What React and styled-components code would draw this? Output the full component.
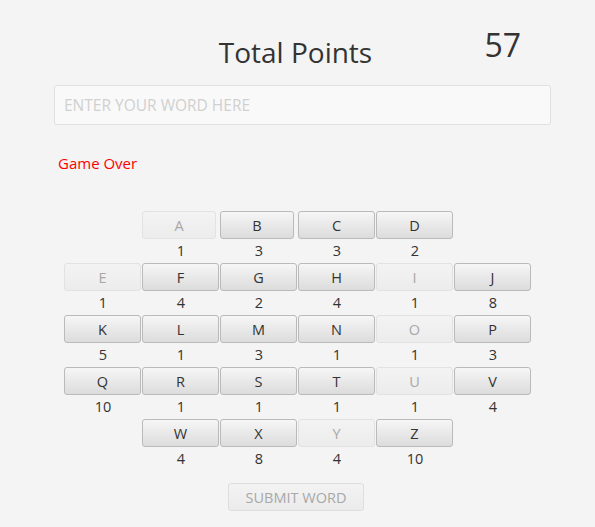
import React from "react";
import styled, { createGlobalStyle } from "styled-components";

const GlobalStyle = createGlobalStyle`
  body {
    margin: 0;
    background: #f4f4f4;
    font-family: "Open Sans", "DejaVu Sans", sans-serif;
    color: #333;
  }
`;

const Page = styled.div`
  width: 595px;
  height: 527px;
  display: flex;
  flex-direction: column;
`;

const Header = styled.div`
  display: grid;
  grid-template-columns: 1fr auto 1fr;
  align-items: center;
  height: 50px;
  margin-top: 27px;
`;

const Title = styled.h1`
  grid-column: 2;
  margin: 0 0 0 -4px;
  font-size: 28px;
  font-weight: 400;
  color: #333;
  line-height: 50px;
`;

const Score = styled.div`
  grid-column: 3;
  justify-self: end;
  margin-right: 74px;
  font-size: 32px;
  color: #333;
  line-height: 40px;
  margin-top: -14px;
`;

const WordInput = styled.input`
  box-sizing: border-box;
  margin: 8px 0 0 54px;
  width: 497px;
  height: 40px;
  padding: 0 9px;
  border: 1px solid #e0e0e0;
  border-radius: 3px;
  background: #f9f9f9;
  font-family: inherit;
  font-size: 15.5px;
  color: #333;
  outline: none;

  &::placeholder {
    color: #d0d0d0;
  }
`;

const Status = styled.div`
  margin: 28px 0 0 58px;
  font-size: 15px;
  color: #ff0000;
  line-height: 20px;
`;

const Board = styled.div`
  display: grid;
  grid-template-columns: repeat(6, 78px);
  grid-auto-rows: 28px 24px;
  margin: 38px 0 0 64px;
`;

const Tile = styled.button`
  grid-column: ${(p) => p.col};
  grid-row: ${(p) => p.row * 2 - 1};
  box-sizing: border-box;
  width: ${(p) => p.w || 77}px;
  height: 28px;
  justify-self: start;
  padding: 0;
  border-radius: 3px;
  font-family: inherit;
  font-size: 14.5px;
  border: 1px solid ${(p) => (p.used ? "#e2e2e2" : "#bababa")};
  color: ${(p) => (p.used ? "#a8a8a8" : "#333")};
  background: ${(p) =>
    p.used
      ? "linear-gradient(#f3f3f3, #ececec)"
      : "linear-gradient(#f6f6f6, #dcdcdc)"};
`;

const Points = styled.div`
  grid-column: ${(p) => p.col};
  grid-row: ${(p) => p.row * 2};
  text-align: center;
  font-size: 14.5px;
  line-height: 24px;
  color: #333;
`;

const SubmitRow = styled.div`
  display: flex;
  justify-content: center;
  margin-top: 12px;
`;

const SubmitButton = styled.button`
  box-sizing: border-box;
  width: 136px;
  height: 28px;
  margin-right: 3px;
  border: 1px solid #dedede;
  border-radius: 3px;
  background: linear-gradient(#f3f3f3, #ebebeb);
  color: #a8a8a8;
  font-family: inherit;
  font-size: 14.5px;
  padding: 0;
`;

const tiles = [
  ["A", 1, 2, 1, true, 74],
  ["B", 3, 3, 1, false, 74],
  ["C", 3, 4, 1],
  ["D", 2, 5, 1],
  ["E", 1, 1, 2, true],
  ["F", 4, 2, 2],
  ["G", 2, 3, 2],
  ["H", 4, 4, 2],
  ["I", 1, 5, 2, true],
  ["J", 8, 6, 2],
  ["K", 5, 1, 3],
  ["L", 1, 2, 3],
  ["M", 3, 3, 3],
  ["N", 1, 4, 3],
  ["O", 1, 5, 3, true],
  ["P", 3, 6, 3],
  ["Q", 10, 1, 4],
  ["R", 1, 2, 4],
  ["S", 1, 3, 4],
  ["T", 1, 4, 4],
  ["U", 1, 5, 4, true],
  ["V", 4, 6, 4],
  ["W", 4, 2, 5],
  ["X", 8, 3, 5],
  ["Y", 4, 4, 5, true],
  ["Z", 10, 5, 5],
];

export default function App() {
  return (
    <>
      <GlobalStyle />
      <Page>
        <Header>
          <Title>Total Points</Title>
          <Score>57</Score>
        </Header>
        <WordInput placeholder="ENTER YOUR WORD HERE" />
        <Status>Game Over</Status>
        <Board>
          {tiles.map(([letter, pts, col, row, used, w]) => (
            <React.Fragment key={letter}>
              <Tile col={col} row={row} used={used} w={w}>
                {letter}
              </Tile>
              <Points col={col} row={row}>
                {pts}
              </Points>
            </React.Fragment>
          ))}
        </Board>
        <SubmitRow>
          <SubmitButton disabled>SUBMIT WORD</SubmitButton>
        </SubmitRow>
      </Page>
    </>
  );
}
